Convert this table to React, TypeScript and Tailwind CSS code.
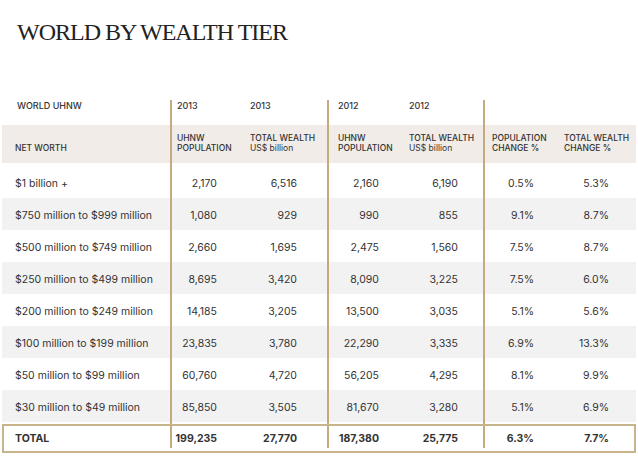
const rows: string[][] = [
  ["$1 billion +", "2,170", "6,516", "2,160", "6,190", "0.5%", "5.3%"],
  ["$750 million to $999 million", "1,080", "929", "990", "855", "9.1%", "8.7%"],
  ["$500 million to $749 million", "2,660", "1,695", "2,475", "1,560", "7.5%", "8.7%"],
  ["$250 million to $499 million", "8,695", "3,420", "8,090", "3,225", "7.5%", "6.0%"],
  ["$200 million to $249 million", "14,185", "3,205", "13,500", "3,035", "5.1%", "5.6%"],
  ["$100 million to $199 million", "23,835", "3,780", "22,290", "3,335", "6.9%", "13.3%"],
  ["$50 million to $99 million", "60,760", "4,720", "56,205", "4,295", "8.1%", "9.9%"],
  ["$30 million to $49 million", "85,850", "3,505", "81,670", "3,280", "5.1%", "6.9%"],
];

const total = ["TOTAL", "199,235", "27,770", "187,380", "25,775", "6.3%", "7.7%"];

// one entry per numeric column: width (incl. divider), header padding, number padding
const cols = [
  { w: "w-[73px] border-l-2 border-[#c3ab7f]", hp: "pl-[5px]", np: "pr-[26px]" },
  { w: "w-[84px]", hp: "pl-[7px]", np: "pr-[30px]" },
  { w: "w-[72px] border-l-2 border-[#c3ab7f]", hp: "pl-[9px]", np: "pr-[20px]" },
  { w: "w-[84px]", hp: "pl-[10px]", np: "pr-[25px]" },
  { w: "w-[73px] border-l-2 border-[#c3ab7f]", hp: "pl-[7px]", np: "pr-[22px]" },
  { w: "w-[80px]", hp: "pl-[8px]", np: "pr-[27px]" },
];

const years = ["2013", "2013", "2012", "2012", "", ""];
const heads: [string, string][] = [
  ["UHNW", "POPULATION"],
  ["TOTAL WEALTH", "US$ billion"],
  ["UHNW", "POPULATION"],
  ["TOTAL WEALTH", "US$ billion"],
  ["POPULATION", "CHANGE %"],
  ["TOTAL WEALTH", "CHANGE %"],
];

const Spacer = ({ h }: { h: string }) => (
  <div className={`flex ${h}`}>
    <div className="w-[168px]" />
    {cols.map((c, i) => (
      <div key={i} className={c.w} />
    ))}
  </div>
);

export default function App() {
  return (
    <div
      className="w-[638px] h-[458px] bg-white text-[#333] overflow-hidden"
      style={{ fontFamily: "Inter, 'Noto Sans', sans-serif" }}
    >
      {/* Title */}
      <h1
        className="pt-[20px] pl-[17px] text-[24px] leading-[24px] tracking-[-1px] text-[#222]"
        style={{ fontFamily: "'Liberation Serif', 'DejaVu Serif', serif" }}
      >
        WORLD BY WEALTH TIER
      </h1>

      <div className="mt-[56px] ml-[2px] w-[634px]">
        {/* Year row */}
        <div className="flex h-[25px] text-[9px] leading-[9px] font-medium">
          <div className="w-[168px] pl-[15px] pt-[1px]">WORLD UHNW</div>
          {cols.map((c, i) => (
            <div key={i} className={`${c.w} ${c.hp} pt-[1px]`}>
              {years[i]}
            </div>
          ))}
        </div>

        {/* Column headers */}
        <div className="flex h-[38px] bg-[#f1ece7] text-[8.5px] leading-[9.5px] font-medium">
          <div className="w-[168px] pl-[13px] pt-[18.5px]">NET WORTH</div>
          {cols.map((c, i) => (
            <div key={i} className={`${c.w} ${c.hp} pt-[9px]`}>
              <div>{heads[i][0]}</div>
              <div className={heads[i][1] === "US$ billion" ? "font-normal" : ""}>{heads[i][1]}</div>
            </div>
          ))}
        </div>

        <Spacer h="h-[3px]" />

        {/* Data rows */}
        {rows.map((r, ri) => (
          <div
            key={ri}
            className={`flex h-[32px] text-[10.5px] ${ri % 2 === 1 ? "bg-[#f2f2f2]" : "bg-white"}`}
          >
            <div className="w-[168px] pl-[13px] pt-[3px] flex items-center">{r[0]}</div>
            {cols.map((c, i) => (
              <div key={i} className={`${c.w} ${c.np} pt-[3px] flex items-center justify-end`}>
                {r[i + 1]}
              </div>
            ))}
          </div>
        ))}

        <Spacer h="h-[2px]" />

        {/* Total */}
        <div className="border-2 border-[#c8b48a] pb-[3px]">
          <div className="flex h-[22px] text-[10.5px] font-bold">
            <div className="w-[166px] pl-[11px] pt-[3px] flex items-center">{total[0]}</div>
            {cols.map((c, i) => (
              <div
                key={i}
                className={`${i === 5 ? "w-[78px] pr-[25px]" : `${c.w} ${c.np}`} pt-[3px] flex items-center justify-end`}
              >
                {total[i + 1]}
              </div>
            ))}
          </div>
        </div>
      </div>
    </div>
  );
}
